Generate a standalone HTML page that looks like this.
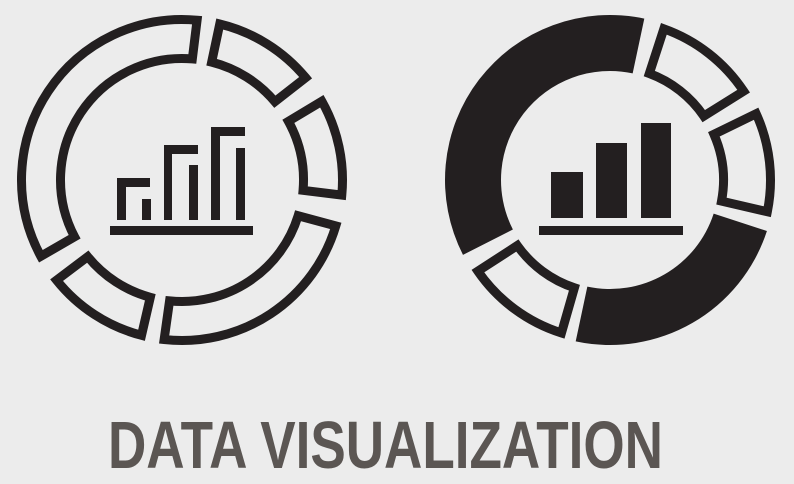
<!DOCTYPE html>
<html><head><meta charset="utf-8"><style>
html,body{margin:0;padding:0;background:#ececec;width:794px;height:484px;overflow:hidden}
svg{display:block}
</style></head><body>
<svg id="s" width="794" height="484" viewBox="0 0 794 484" xmlns="http://www.w3.org/2000/svg">
<g id="g"></g>
<g fill="#231f20">
<!-- left bars -->
<rect x="110" y="226" width="143" height="9"/>
<path d="M117 220V178H150V187H126V220Z"/>
<rect x="142" y="199" width="9" height="21"/>
<path d="M164 220V145H198V154H172V220Z"/>
<rect x="189" y="165" width="9" height="55"/>
<path d="M211 220V127H245V136H220V220Z"/>
<rect x="236" y="148" width="9" height="72"/>
<!-- right bars -->
<rect x="539" y="226" width="144" height="9"/>
<rect x="551" y="172" width="32" height="46"/>
<rect x="596" y="143" width="31" height="75"/>
<rect x="641" y="123" width="30" height="95"/>
</g>
<text x="108" y="468" textLength="555" lengthAdjust="spacingAndGlyphs" font-family="Liberation Sans, sans-serif" font-weight="bold" font-size="67" fill="#5b5653">DATA VISUALIZATION</text>
</svg>
<script>
var g=document.getElementById('g');var h='';
function pt(cx,cy,r,a){return [cx+r*Math.sin(a),cy-r*Math.cos(a)];}
function sector(cx,cy,R,r,a0,a1,inset){
 var d=Math.PI/180;a0*=d;a1*=d;
 var ro=R-inset,ri=r+inset;
 var o0=a0+(inset?inset/ro:0),o1=a1-(inset?inset/ro:0);
 var i0=a0+(inset?inset/ri:0),i1=a1-(inset?inset/ri:0);
 var p1=pt(cx,cy,ro,o0),p2=pt(cx,cy,ro,o1),p3=pt(cx,cy,ri,i1),p4=pt(cx,cy,ri,i0);
 var lo=(o1-o0)>Math.PI?1:0,li=(i1-i0)>Math.PI?1:0;
 return 'M'+p1.join(' ')+'A'+ro+' '+ro+' 0 '+lo+' 1 '+p2.join(' ')+'L'+p3.join(' ')+'A'+ri+' '+ri+' 0 '+li+' 0 '+p4.join(' ')+'Z';
}
function outl(cx,cy,R,r,a0,a1){h+='<path d="'+sector(cx,cy,R,r,a0,a1,4.5)+'" fill="none" stroke="#231f20" stroke-width="9" stroke-linejoin="miter"/>';}
function fill(cx,cy,R,r,a0,a1){h+='<path d="'+sector(cx,cy,R,r,a0,a1,0)+'" fill="#231f20"/>';}
// left
var L=[182,180,165,117];
outl(L[0],L[1],L[2],L[3],240,367);
outl(L[0],L[1],L[2],L[3],12,52);
outl(L[0],L[1],L[2],L[3],59,97);
outl(L[0],L[1],L[2],L[3],105,188);
outl(L[0],L[1],L[2],L[3],193,233);
// right
var R=[610,180,165,109];
fill(R[0],R[1],R[2],R[3],243,372);
outl(R[0],R[1],R[2],R[3],18,58);
outl(R[0],R[1],R[2],R[3],64,103);
fill(R[0],R[1],R[2],R[3],108,192);
outl(R[0],R[1],R[2],R[3],196,237);
g.innerHTML=h;
</script>
</body></html>
